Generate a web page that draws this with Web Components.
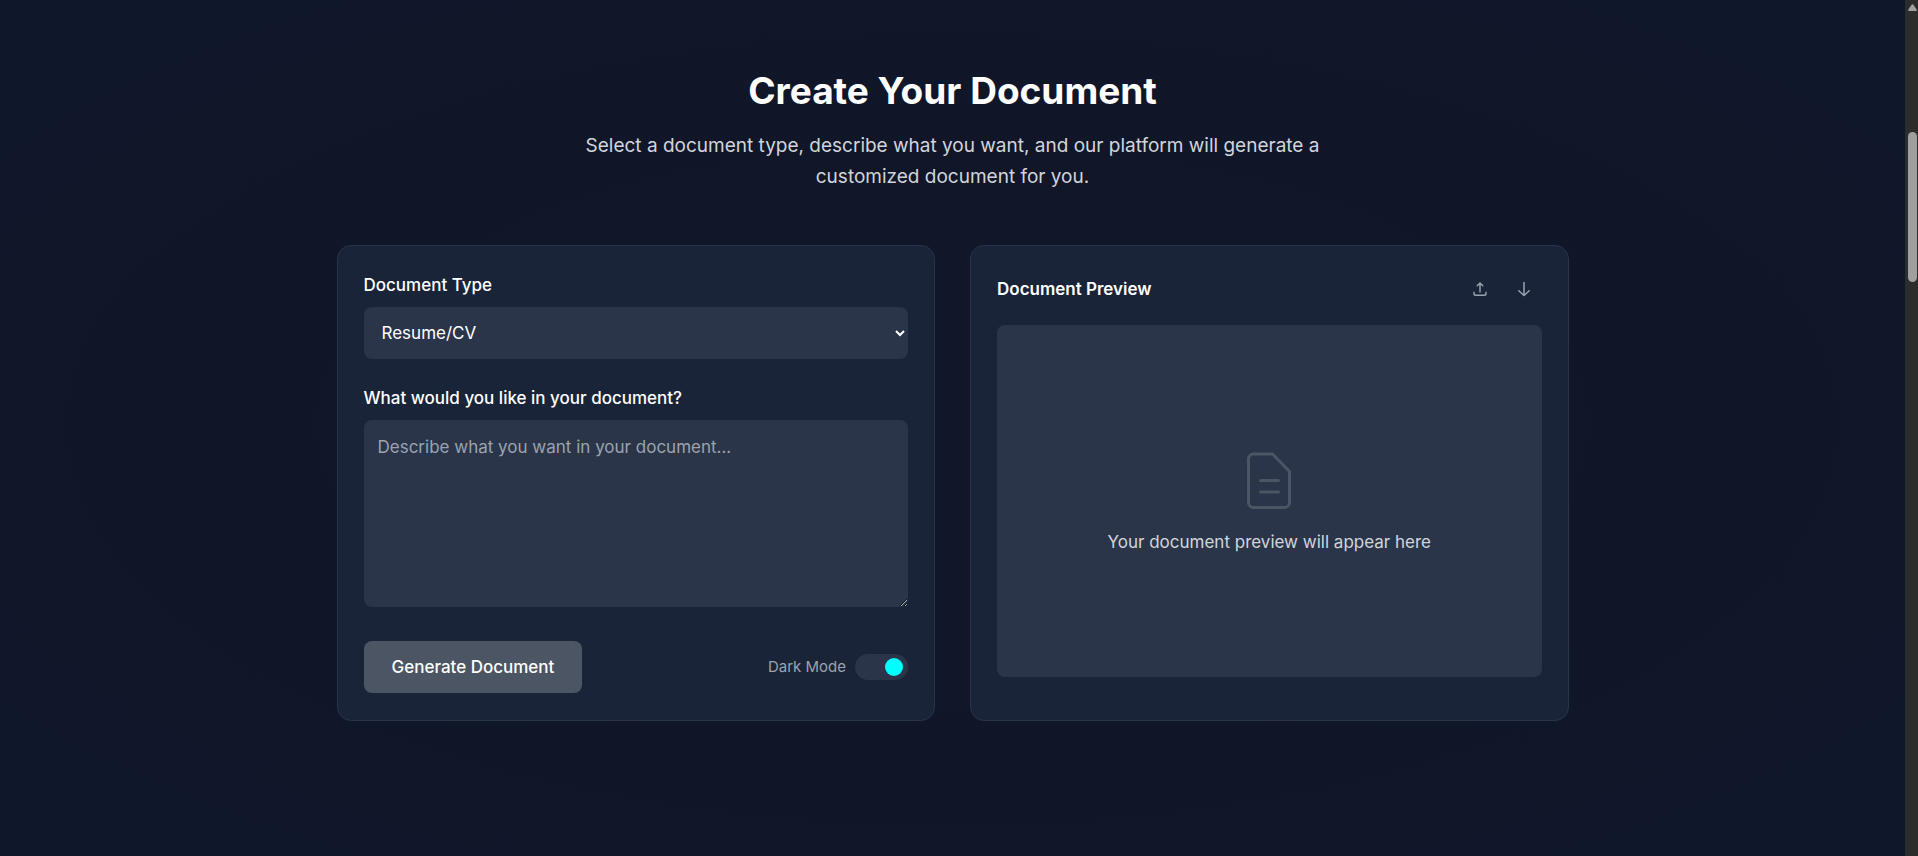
<!DOCTYPE html>
<html lang="en">
<head>
<meta charset="utf-8">
<meta name="viewport" content="width=device-width, initial-scale=1">
<title>Create Your Document</title>
<style>
body { margin: 0; background: #101729; font-family: Inter, sans-serif; font-size: 17px; color: #fff; }
</style>
</head>
<body>
<page-frame>
  <section-heading>
    <span slot="title">Create Your Document</span>
    Select a document type, describe what you want, and our platform will generate a customized document for you.
  </section-heading>
  <card-grid>
    <panel-card><document-form></document-form></panel-card>
    <panel-card><document-preview></document-preview></panel-card>
  </card-grid>
</page-frame>
<script>
const define = (name, markup) => {
  const template = document.createElement('template');
  template.innerHTML = markup;
  customElements.define(name, class extends HTMLElement {
    constructor() {
      super();
      this.attachShadow({ mode: 'open' }).append(template.content.cloneNode(true));
    }
  });
};

define('scroll-track', `
<style>
:host { display: flex; flex-direction: column; align-items: center; box-sizing: border-box; width: 13px; padding: 4px 1px 0 3px; background: #2c2c2c; }
svg { display: block; width: 9px; height: 7px; }
.thumb { width: 9px; height: 150px; margin-top: 121px; border-radius: 5px; background: #9f9f9f; }
</style>
<svg viewBox="0 0 9 7" aria-hidden="true"><path d="M3.6.8Q4.5-.3 5.4.8L8.7 5.6Q9 7 8 7H1Q0 7 .3 5.6Z" fill="#9f9f9f"/></svg>
<div class="thumb"></div>`);

define('page-frame', `
<style>
:host { display: flex; min-height: 100vh; }
main { flex: 1; min-width: 0; padding: 69px 24px 48px; box-sizing: border-box; background: radial-gradient(ellipse at center, #111628 30%, #0f172a 100%); }
.inner { max-width: 1232px; margin: 0 auto; }
</style>
<main><div class="inner"><slot></slot></div></main>
<scroll-track></scroll-track>`);

define('section-heading', `
<style>
:host { display: block; margin-bottom: 53px; text-align: center; }
h1 { margin: 0 0 17px; font-size: 37px; line-height: 44px; font-weight: 700; }
p { max-width: 768px; margin: 0 auto; font-size: 19px; line-height: 31px; color: #d1d5db; }
</style>
<h1><slot name="title"></slot></h1>
<p><slot></slot></p>`);

define('card-grid', `
<style>
:host { display: grid; grid-template-columns: repeat(auto-fit, minmax(min(100%, 440px), 1fr)); gap: 35px; }
</style>
<slot></slot>`);

define('panel-card', `
<style>
:host { display: block; padding: 26px 26px 27px; border: 1px solid #283447; border-radius: 14px; background: #1a2438; }
</style>
<slot></slot>`);

define('toggle-switch', `
<style>
:host { display: block; }
label { display: flex; align-items: center; gap: 9px; font-size: 15px; line-height: 24px; color: #9ca3af; }
input { appearance: none; display: flex; align-items: center; box-sizing: border-box; width: 53px; height: 26px; margin: 0; padding: 0 5px; border-radius: 13px; background: #2a3549; }
input::before { content: ""; width: 18px; height: 18px; border-radius: 50%; background: #9ca3af; }
input:checked { justify-content: flex-end; }
input:checked::before { background: #00ffff; }
</style>
<label for="mode">Dark Mode <input id="mode" type="checkbox" role="switch" checked></label>`);

define('document-form', `
<style>
:host { display: block; }
label { display: block; margin-bottom: 8px; font-weight: 500; line-height: 27px; }
select, textarea { display: block; box-sizing: border-box; width: 100%; border: 0; border-radius: 8px; background-color: #2a3549; color: #fff; font: inherit; line-height: 27px; }
select { height: 52px; padding: 0 0 0 14px; margin-bottom: 26px; }
textarea { height: 187px; padding: 14px; resize: vertical; margin-bottom: 34px; }
textarea::placeholder { color: #9ca3af; }
.actions { display: flex; flex-wrap: wrap; align-items: center; justify-content: space-between; gap: 16px; }
button { height: 52px; padding: 0 28px; border: 0; border-radius: 8px; background: #4b5563; color: #fff; font: inherit; font-weight: 500; }
</style>
<label for="type">Document Type</label>
<select id="type"><option>Resume/CV</option></select>
<label for="prompt">What would you like in your document?</label>
<textarea id="prompt" placeholder="Describe what you want in your document..."></textarea>
<div class="actions"><button type="button">Generate Document</button><toggle-switch></toggle-switch></div>`);

define('document-preview', `
<style>
:host { display: block; }
header { display: flex; align-items: center; justify-content: space-between; margin-bottom: 19px; }
h2 { margin: 0; font-size: 17px; line-height: 27px; font-weight: 600; }
.tools { display: flex; gap: 8px; }
button { display: grid; place-items: center; width: 36px; height: 34px; padding: 0; border: 0; background: none; color: #9ca3af; }
svg { display: block; fill: none; stroke: currentColor; stroke-linecap: round; stroke-linejoin: round; }
.empty { display: flex; flex-direction: column; align-items: center; justify-content: center; gap: 13px; box-sizing: border-box; min-height: 352px; padding-bottom: 3px; border-radius: 8px; background: #2a3549; color: #4b5563; }
p { margin: 0; line-height: 27px; color: #d1d5db; }
</style>
<header>
  <h2>Document Preview</h2>
  <div class="tools">
    <button type="button" aria-label="Upload"><svg width="18" height="18" viewBox="0 0 18 18" stroke-width="1.4"><path d="M3 12.3v1.2Q3 15.3 4.8 15.3h8.4Q15 15.3 15 13.500v-1.2M9 12V3M6.200 5.700 9 2.900l2.800 2.800"/></svg></button>
    <button type="button" aria-label="Download"><svg width="18" height="18" viewBox="0 0 18 18" stroke-width="1.5"><path d="M9 2.500v13M3.800 10.700 9 15.500l5.200-4.800"/></svg></button>
  </div>
</header>
<div class="empty">
  <svg width="72" height="72" viewBox="0 0 72 72" stroke-width="3"><path d="M20 10H39.500L56.500 27.500V58.500a5 5 0 0 1-5 5h-31a5 5 0 0 1-5-5V15a5 5 0 0 1 5-5ZM27.500 36.500h18M27.500 48h18"/></svg>
  <p>Your document preview will appear here</p>
</div>`);
</script>
</body>
</html>
